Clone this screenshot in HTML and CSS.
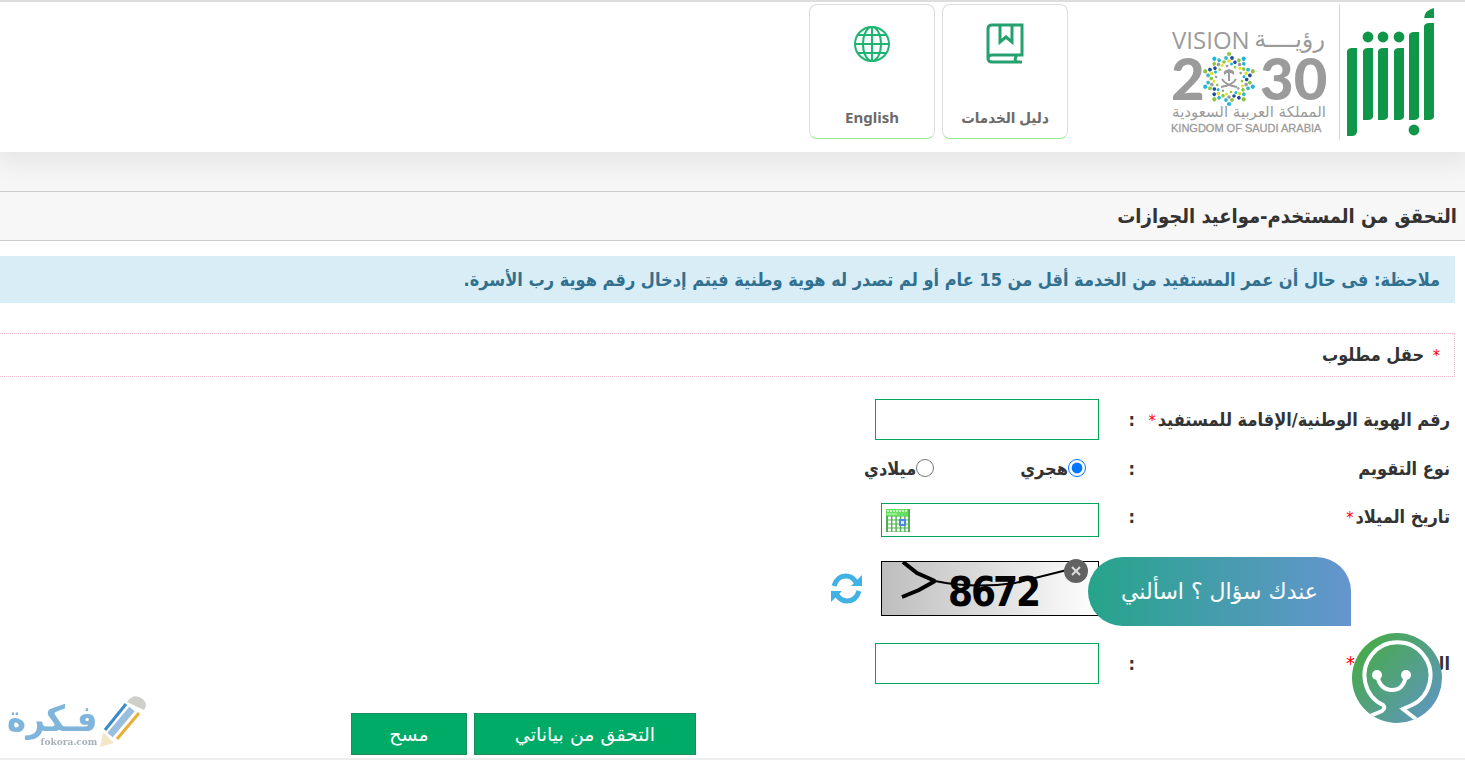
FILE: index.html
```
<!DOCTYPE html>
<html lang="ar" dir="rtl">
<head>
    <meta charset="UTF-8">
    <meta name="viewport" content="width=device-width, initial-scale=1.0">
    <title>التحقق من المستخدم-مواعيد الجوازات</title>
    <link rel="stylesheet" href="styles.css">
</head>
<body>
    <header class="site-header">
        <a href="#" class="absher-logo" aria-label="أبشر">
            <svg width="88" height="130" viewBox="0 0 88 130" fill="#109648">
                <path d="M0 43q1-3 5-3h5v84q-1 4-5 4H0z"/>
                <path d="M16 43q1-3 5-3h5v69q-1 3-5 3h-5z"/>
                <path d="M31 43q1-3 5-3h5v69q-1 3-5 3h-5z"/>
                <path d="M47 43q1-3 5-3h5v69q-1 3-5 3h-5z"/>
                <path d="M62 27q1-3 5-3h5v85q-1 3-5 3h-5z"/>
                <path d="M77 18q1-3 5-3h5v94q-1 3-5 3h-5z"/>
                <path d="M77 10q1-8 10-10v10z"/>
                <circle cx="21" cy="29" r="5.4"/>
                <circle cx="36" cy="29" r="5.4"/>
                <circle cx="52" cy="29" r="5.4"/>
                <circle cx="67" cy="122" r="5.4"/>
            </svg>
        </a>
        <a href="#" class="vision-logo" aria-label="رؤية 2030">
            <svg width="160" height="116" viewBox="0 -4 160 116" direction="ltr" fill="#9b9b9b">
                <defs>
                    <g id="ray-a">
                        <circle cy="-25" r="2.1" fill="#8cc63f"/>
                        <circle cx="-3" cy="-21" r="1.9" fill="#35b7c9"/>
                        <circle cx="3" cy="-21" r="1.9" fill="#1d4f9c"/>
                        <circle cy="-18" r="1.8" fill="#dfe02a"/>
                        <circle cx="-5" cy="-17" r="1.8" fill="#8cc63f"/>
                        <circle cx="2.5" cy="-15" r="1.5" fill="#1fb5e0"/>
                        <circle cx="-2" cy="-13" r="1.3" fill="#9b9b9b"/>
                    </g>
                    <g id="ray-b">
                        <circle cy="-25" r="2.1" fill="#1fb5e0"/>
                        <circle cx="-3" cy="-21" r="1.9" fill="#8cc63f"/>
                        <circle cx="3" cy="-21" r="1.9" fill="#35b7c9"/>
                        <circle cy="-18" r="1.8" fill="#9b9b9b"/>
                        <circle cx="-5" cy="-17" r="1.8" fill="#1d4f9c"/>
                        <circle cx="2.5" cy="-15" r="1.5" fill="#dfe02a"/>
                        <circle cx="-2" cy="-13" r="1.3" fill="#8cc63f"/>
                    </g>
                </defs>
                <text x="1" y="23" class="vision-en">VISION</text>
                <text x="154" y="21" class="vision-ar" text-anchor="end">رؤيــــة</text>
                <text x="0" y="74" class="vision-num">2</text>
                <text x="89" y="74" class="vision-num">30</text>
                <g transform="translate(58 53)">
                    <use href="#ray-a"/>
                    <use href="#ray-b" transform="rotate(36)"/>
                    <use href="#ray-a" transform="rotate(72)"/>
                    <use href="#ray-b" transform="rotate(108)"/>
                    <use href="#ray-a" transform="rotate(144)"/>
                    <use href="#ray-b" transform="rotate(180)"/>
                    <use href="#ray-a" transform="rotate(216)"/>
                    <use href="#ray-b" transform="rotate(252)"/>
                    <use href="#ray-a" transform="rotate(288)"/>
                    <use href="#ray-b" transform="rotate(324)"/>
                    <path d="M-1 2h2V-6h-2z"/>
                    <path d="M-5-4q-1-5 3-5 2-2 4 0 4 0 3 5l-3-2h-4z"/>
                    <path d="M-7 0Q-4 6 8 8M7 0Q4 6-8 8" fill="none" stroke="#9b9b9b" stroke-width="1.8"/>
                </g>
                <text x="155" y="91" class="vision-sub-ar" text-anchor="end">المملكة العربية السعودية</text>
                <text x="0" y="106" class="vision-sub-en">KINGDOM OF SAUDI ARABIA</text>
            </svg>
        </a>
        <nav class="tiles">
            <a href="#" class="tile">
                <svg width="38" height="42" viewBox="0 0 38 42" fill="none" stroke="#27a070" stroke-width="3">
                    <path d="M36 39H6q-4 0-4-4V6q0-4 4-4H36V32H6q-4 0-4 4M31 32q-3 3-1 7"/>
                    <path d="M14 2V19L20 14l6 5V2"/>
                </svg>
                <span>دليل الخدمات</span>
            </a>
            <a href="#" class="tile">
                <svg width="38" height="42" viewBox="0 0 38 42" fill="none" stroke="#1fb473" stroke-width="2">
                    <circle cx="19" cy="21" r="17"/>
                    <ellipse cx="19" cy="21" rx="9" ry="17"/>
                    <path d="M19 4V38M2 21H36M5 12H33M5 30H33"/>
                </svg>
                <span>English</span>
            </a>
        </nav>
    </header>

    <h1 class="page-title">التحقق من المستخدم-مواعيد الجوازات</h1>

    <main>
        <p class="note">ملاحظة: فى حال أن عمر المستفيد من الخدمة أقل من 15 عام أو لم تصدر له هوية وطنية فيتم إدخال رقم هوية رب الأسرة.</p>
        <p class="required-note"><span class="star">*</span> حقل مطلوب</p>

        <form class="verify-form">
            <div class="row">
                <div class="label"><label for="id-number">رقم الهوية الوطنية/الإقامة للمستفيد<span class="star">*</span></label></div>
                <span class="colon">:</span>
                <input type="text" id="id-number" class="text-input">
            </div>
            <div class="row">
                <div class="label">نوع التقويم</div>
                <span class="colon">:</span>
                <div class="radios">
                    <label><input type="radio" name="calendar" checked>هجري</label>
                    <label><input type="radio" name="calendar">ميلادي</label>
                </div>
            </div>
            <div class="row">
                <div class="label"><label for="birth-date">تاريخ الميلاد<span class="star">*</span></label></div>
                <span class="colon">:</span>
                <div class="date-field">
                    <input type="text" id="birth-date">
                    <button type="button" aria-label="التقويم">
                        <svg width="24" height="23" viewBox="0 0 24 23">
                            <path fill="#4fb04f" d="M0 0h24v23H0z"/>
                            <path fill="#66e060" d="M0 0h22v7H0z"/>
                            <path stroke="#c9f7c4" stroke-width="2" stroke-dasharray="2 1" d="M1 2h20"/>
                            <path stroke="#c9f7c4" stroke-width="1" d="M1 5h10"/>
                            <path stroke="#fff" stroke-width="3" stroke-dasharray="3 1.4" d="M2 9h20M2 13h20M2 17h20M2 21h20"/>
                            <path fill="#d9ecff" stroke="#4b86e8" stroke-width="2" d="M14 11h5v5h-5z"/>
                        </svg>
                    </button>
                </div>
            </div>
            <div class="row captcha-row">
                <div class="label"></div>
                <span></span>
                <div class="captcha">
                    <svg class="captcha-img" width="218" height="55" viewBox="0 0 218 55" role="img" aria-label="8672">
                        <defs>
                            <linearGradient id="captcha-bg">
                                <stop offset="0" stop-color="#bdbdbd"/>
                                <stop offset="1" stop-color="#fff"/>
                            </linearGradient>
                        </defs>
                        <rect x=".5" y=".5" width="217" height="54" fill="url(#captcha-bg)" stroke="#000"/>
                        <g fill="none" stroke="#000">
                            <path stroke-width="4" d="M22 1L36 12 54 20M21 36L38 29 54 20"/>
                            <path stroke-width="2" d="M54 20Q92 28 134 22L186 9"/>
                        </g>
                        <text class="captcha-text" direction="ltr" x="67 90 112 135" y="45">8672</text>
                    </svg>
                    <button type="button" class="refresh" aria-label="تحديث">
                        <svg width="31" height="31" viewBox="0 0 31 31" fill="none" stroke="#41b2e3" stroke-width="5">
                            <path d="M3 13Q6 3 15 3q6 0 10 6"/>
                            <path d="M28 18Q25 28 16 28q-6 0-10-6"/>
                            <path fill="#41b2e3" stroke="none" d="M31 2v11H20zM0 29V18h11z"/>
                        </svg>
                    </button>
                </div>
            </div>
            <div class="row">
                <div class="label"><label for="captcha-code">الرمز أدناه<span class="star big">*</span></label></div>
                <span class="colon">:</span>
                <input type="text" id="captcha-code" class="text-input">
            </div>
            <div class="actions">
                <button type="submit" class="wide">التحقق من بياناتي</button>
                <button type="reset">مسح</button>
            </div>
        </form>
    </main>

    <footer class="site-footer"></footer>

    <!-- المساعد -->
    <aside class="assistant">
        <button type="button" class="assistant-close" aria-label="إغلاق">
            <svg width="24" height="24" viewBox="0 0 24 24">
                <circle cx="12" cy="12" r="12" fill="#626262"/>
                <path d="M8 8l8 8M16 8l-8 8" stroke="#ddd" stroke-width="2"/>
            </svg>
        </button>
        <a href="#" class="assistant-bubble">عندك سؤال ؟ اسألني</a>
        <button type="button" class="assistant-face" aria-label="المساعد">
            <svg width="92" height="92" viewBox="0 0 92 92" fill="none" stroke="#fff" stroke-width="4">
                <defs>
                    <linearGradient id="face-bg" x1="0.1" y1="0.2" x2="0.9" y2="0.9">
                        <stop offset="0" stop-color="#48a94e"/>
                        <stop offset="1" stop-color="#5e97bd"/>
                    </linearGradient>
                    <clipPath id="face-clip"><circle cx="46" cy="46" r="45"/></clipPath>
                </defs>
                <circle cx="46" cy="46" r="45" fill="url(#face-bg)" stroke="none"/>
                <g clip-path="url(#face-clip)">
                    <path d="M19 84L31 79q4-3 1-6A33 33 0 1 1 61 73L52 77 66 88"/>
                </g>
                <path d="M26 43Q29 58 41 58T55 43"/>
                <circle cx="26" cy="43" r="5" fill="#fff" stroke="none"/>
                <circle cx="55" cy="43" r="5" fill="#fff" stroke="none"/>
            </svg>
        </button>
    </aside>

    <div class="watermark">
        <div class="watermark-name">
            <b>فـكرة</b>
            <small>fokora.com</small>
        </div>
        <svg width="46" height="52" viewBox="0 0 46 52">
            <path fill="#cfcfc9" d="M27 7Q33-2 41 3t3 12z"/>
            <path fill="#f5e6c8" d="M3 37L14 48 0 52z"/>
            <path stroke="#3a8bc8" stroke-width="3" d="M5 35L26 9"/>
            <path stroke="#9abfde" stroke-width="7" d="M10 40L32 14"/>
            <path stroke="#e8ae35" stroke-width="3" d="M17 44L39 18"/>
        </svg>
    </div>
</body>
</html>
```
FILE: styles.css
```
* {
    box-sizing: border-box;
}

body {
    margin: 0;
    background: #fff;
    color: #333;
    font-family: "DejaVu Sans Condensed", "DejaVu Sans", sans-serif;
    font-size: 18px;
    font-weight: bold;
}

a {
    color: inherit;
    text-decoration: none;
}

svg {
    display: block;
}

button,
input {
    font-family: inherit;
}

button {
    padding: 0;
    border: 0;
    background: none;
    cursor: pointer;
}

/* الترويسة */
.site-header {
    position: relative;
    display: flex;
    align-items: flex-start;
    height: 152px;
    padding: 0 30px;
    border-top: 2px solid #dcdedc;
    background: #fff;
    box-shadow: 0 0 30px 10px rgba(0, 0, 0, 0.08);
}

.absher-logo {
    height: 136px;
    margin-top: 2px;
    padding: 4px 0 0 7px;
    border-left: 1px solid #d5d5d5;
}

.vision-logo {
    margin: 20px 8px 0 0;
}

.vision-en {
    font: 24px "Open Sans", sans-serif;
}

.vision-ar {
    font: 24px "DejaVu Sans", sans-serif;
}

.vision-num {
    font: 900 58px Lato, sans-serif;
}

.vision-sub-ar {
    font: 15px "DejaVu Sans", sans-serif;
}

.vision-sub-en {
    font: 11px "Liberation Sans", sans-serif;
    stroke: #9b9b9b;
    stroke-width: 0.3px;
}

.tiles {
    display: flex;
    gap: 7px;
    margin: 2px 103px 0 0;
}

.tile {
    display: flex;
    flex-direction: column;
    align-items: center;
    justify-content: space-between;
    width: 126px;
    height: 135px;
    padding: 18px 0 11px;
    border: 1px solid #ddd;
    border-bottom-color: #90ee90;
    border-radius: 8px;
    color: #6b6b6b;
    font-family: "Noto Sans", "DejaVu Sans Condensed", sans-serif;
    font-size: 15px;
}

/* عنوان الصفحة */
.page-title {
    margin: 39px 0 0;
    padding: 0 8px;
    border: solid #ccc;
    border-width: 1px 0;
    background: #f7f7f7;
    box-shadow: 0 -39px 0 #f7f7f7;
    font-size: 20px;
    line-height: 48px;
}

main {
    padding: 15px 10px 0 0;
}

.note {
    margin: 0 0 30px;
    padding: 0 15px;
    background: #d9edf7;
    color: #31708f;
    line-height: 47px;
}

.required-note {
    margin: 0 0 22px;
    padding: 0 14px;
    border: 1px dotted #f0b8cc;
    border-left: 0;
    line-height: 42px;
}

.star {
    color: #f00;
    font-size: 16px;
    font-weight: normal;
    line-height: 1;
}

.required-note .star {
    margin-left: 3px;
}

.label .star {
    margin-right: 2px;
}

.label .big {
    margin-right: 12px;
    font-size: 20px;
}

/* النموذج */
.verify-form {
    padding-right: 5px;
}

.row {
    display: grid;
    grid-template-columns: 315px 36px 1fr;
    align-items: center;
    justify-items: start;
    min-height: 40px;
    margin-bottom: 8px;
}

.label {
    white-space: nowrap;
}

.text-input {
    width: 224px;
    height: 41px;
    border: 1px solid #00a65a;
}

.radios {
    display: flex;
    gap: 86px;
    padding-right: 13px;
}

.radios label {
    display: flex;
    align-items: center;
}

.radios input {
    width: 18px;
    height: 18px;
    margin: 0;
}

.date-field {
    display: flex;
    align-items: center;
    width: 218px;
    height: 34px;
    margin-top: 7px;
    padding-left: 4px;
    border: 1px solid #00a65a;
}

.date-field input {
    flex: 1;
    min-width: 0;
    height: 30px;
    border: 0;
    outline: 0;
}

.captcha-row {
    margin: 24px 0 27px;
}

.captcha {
    display: flex;
    align-items: center;
    gap: 19px;
}

.captcha-text {
    font: bold 40px "DejaVu Sans Condensed", sans-serif;
}

.actions {
    display: flex;
    gap: 7px;
    margin-top: 29px;
    padding-right: 52%;
}

.actions button {
    width: 116px;
    height: 42px;
    border: 1px solid #1f8a5b;
    background: #00ab67;
    color: #fff;
    font-family: "DejaVu Sans", sans-serif;
    font-size: 19px;
}

.actions .wide {
    width: 222px;
}

.site-footer {
    height: 2px;
    margin-top: 3px;
    background: #eee;
}

/* المساعد */
.assistant {
    position: fixed;
    right: 22px;
    bottom: 36px;
    display: flex;
    flex-direction: column;
    align-items: flex-start;
    gap: 6px;
}

.assistant-bubble {
    width: 263px;
    margin-right: 92px;
    border-radius: 35px 35px 0 35px;
    background: linear-gradient(90deg, #26a48a, #6595cf);
    color: #fff;
    font-family: "DejaVu Sans", sans-serif;
    font-size: 22px;
    font-weight: normal;
    line-height: 69px;
    text-align: center;
}

.assistant-close {
    position: absolute;
    top: 2px;
    left: -24px;
}

/* شعار الموقع */
.watermark {
    position: fixed;
    bottom: 13px;
    left: 7px;
    display: flex;
    flex-direction: row-reverse;
    align-items: flex-end;
    gap: 3px;
}

.watermark-name {
    display: flex;
    flex-direction: column;
    color: #7fb5da;
    font-size: 36px;
    line-height: 36px;
}

.watermark-name small {
    color: #a5b0b8;
    font: bold 9px "DejaVu Serif", serif;
    line-height: 10px;
}
```
